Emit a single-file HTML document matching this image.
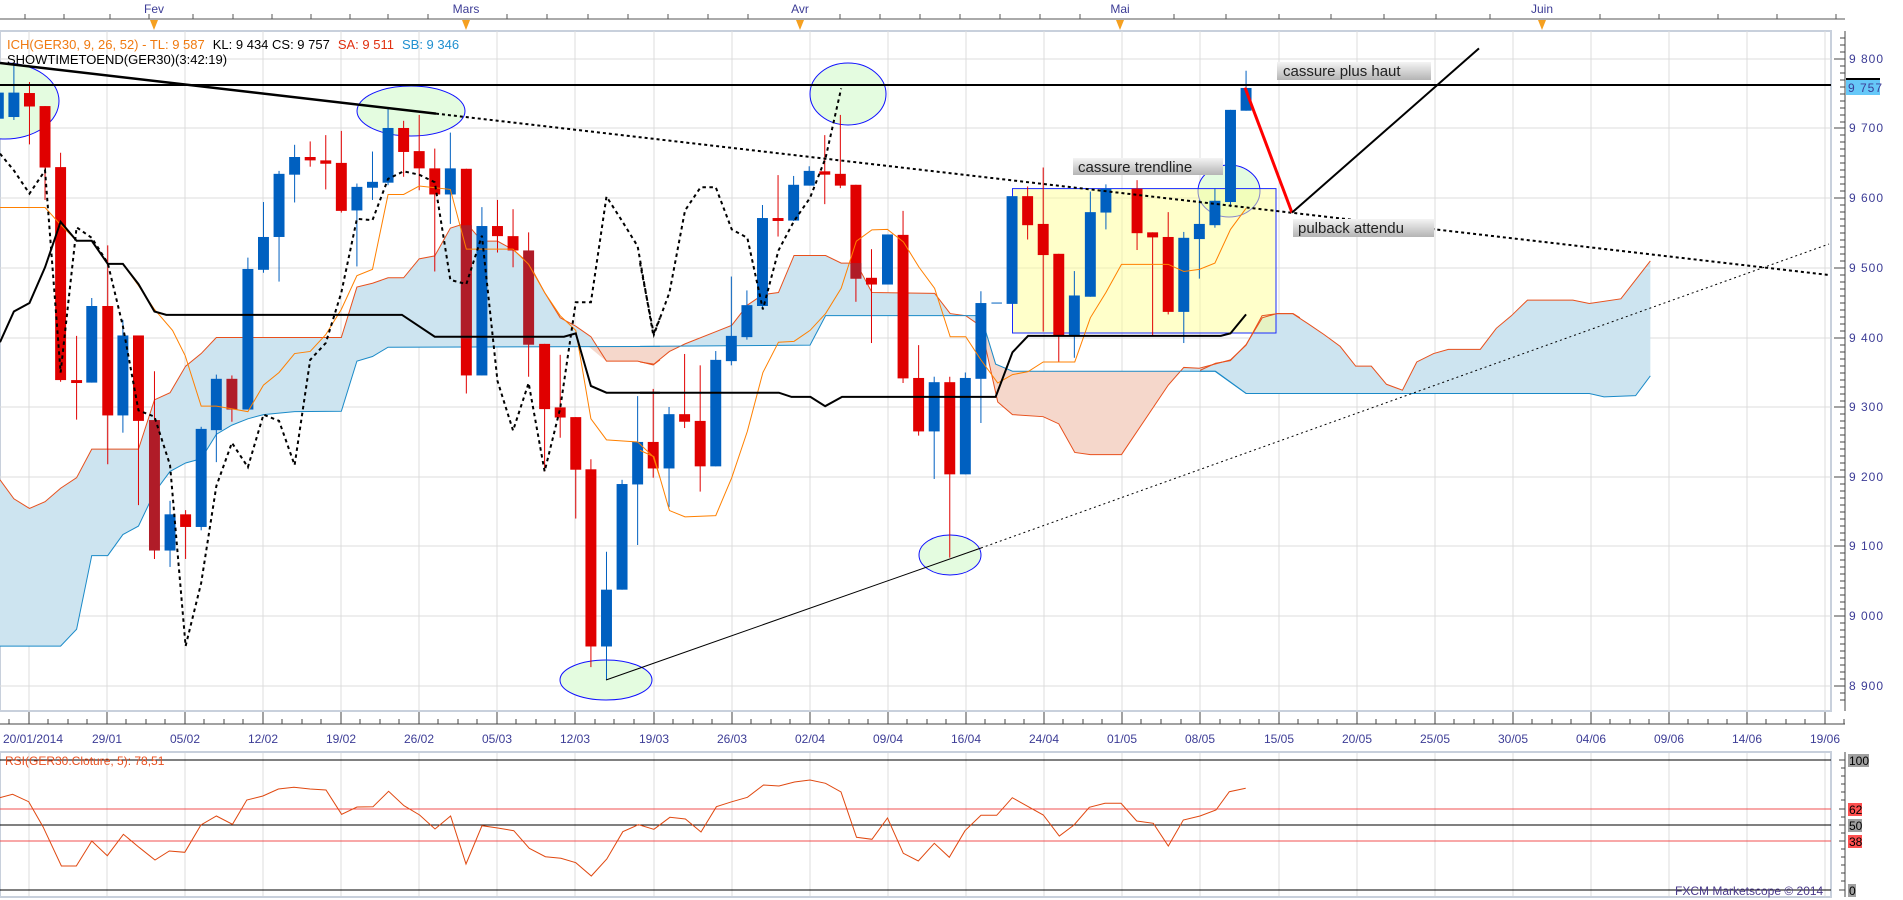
<!DOCTYPE html>
<html><head><meta charset="utf-8">
<style>
html,body{margin:0;padding:0;background:#fff;width:1903px;height:900px;overflow:hidden}
svg{display:block;font-family:"Liberation Sans",sans-serif}
.z *{vector-effect:non-scaling-stroke}
.b{fill:#0060c0}.r{fill:#e00000}.d{fill:#b01c28}
.wb{stroke:#0060c0;stroke-width:1}.wr{stroke:#e00000;stroke-width:1}
.pl{font-size:12px;fill:#3c3c96;letter-spacing:1px}
.dl{font-size:12px;fill:#3c3c96}
</style></head><body>
<svg width="1903" height="900" viewBox="0 0 1903 900" xmlns="http://www.w3.org/2000/svg">
<defs>
<linearGradient id="gg" x1="0" y1="0" x2="0" y2="1"><stop offset="0" stop-color="#f4f4f4"/><stop offset="1" stop-color="#b4b4b4"/></linearGradient>
</defs>
<rect width="1903" height="900" fill="#fff"/>

<g>
<text x="154" y="13" class="dl" text-anchor="middle">Fev</text>
<text x="466" y="13" class="dl" text-anchor="middle">Mars</text>
<text x="800" y="13" class="dl" text-anchor="middle">Avr</text>
<text x="1120" y="13" class="dl" text-anchor="middle">Mai</text>
<text x="1542" y="13" class="dl" text-anchor="middle">Juin</text>
<line x1="0" y1="19" x2="1845" y2="19" stroke="#555" stroke-width="1"/>
<path d="M25 19v-5M64 19v-5M110 19v-5M149 19v-5M193 19v-5M233 19v-5M272 19v-5M311 19v-5M350 19v-5M388 19v-5M428 19v-5M507 19v-5M547 19v-5M588 19v-5M628 19v-5M668 19v-5M708 19v-5M748 19v-5M840 19v-5M880 19v-5M920 19v-5M960 19v-5M1000 19v-5M1040 19v-5M1080 19v-5M1174 19v-5M1226 19v-5M1279 19v-5M1331 19v-5M1384 19v-5M1436 19v-5M1490 19v-5M1600 19v-5M1659 19v-5M1718 19v-5M1777 19v-5M1836 19v-5" stroke="#555"/>
<path d="M150 20h8l-4 10zM462 20h8l-4 10zM796 20h8l-4 10zM1116 20h8l-4 10zM1538 20h8l-4 10z" fill="#f5a020"/>
</g>

<rect x="0" y="31" width="1831" height="680" fill="#fff" stroke="#c8d0dc" stroke-width="2"/>
<g stroke="#dcdcdc" stroke-width="1">
<path d="M0 59H1831M0 128H1831M0 198H1831M0 268H1831M0 338H1831M0 407H1831M0 477H1831M0 546H1831M0 616H1831M0 686H1831"/>
<path d="M29 31V711M107 31V711M185 31V711M263 31V711M341 31V711M419 31V711M497 31V711M575 31V711M654 31V711M732 31V711M810 31V711M888 31V711M966 31V711M1044 31V711M1122 31V711M1200 31V711M1279 31V711M1357 31V711M1435 31V711M1513 31V711M1591 31V711M1669 31V711M1747 31V711M1825 31V711"/>
</g>

<g class="z" transform="translate(0,40) scale(0.42088)">
<polygon fill="#cde4f0" points="0,1045 33,1090 70,1113 107,1097 144,1065 182,1040 218,972 329,972 367,855 404,838 441,775 478,745 514,707 811,707 848,587 885,578 922,565 959,565 996,520 1033,513 1070,447 1108,435 1145,478 1182,478 1219,498 1256,530 1294,600 1331,660 1368,680 1404,705 1441,763 1515,763 1552,772 1568,760 1568,728 922,730 885,752 848,763 811,882 700,883 626,890 589,900 551,915 514,937 478,995 441,1005 404,1025 367,1075 329,1155 292,1175 256,1225 218,1225 182,1400 144,1440 0,1440"/>
</g>
<g class="z" transform="translate(640,40) scale(0.42088)">
<polygon fill="#cde4f0" points="0,765 33,770 70,740 107,722 180,693 218,678 255,630 292,605 329,600 366,512 441,512 478,530 514,530 551,600 700,602 737,650 774,655 810,680 850,860 885,890 958,895 995,912 1033,980 1070,985 1144,985 1255,820 1292,778 1329,780 1403,760 1440,725 1478,655 1515,650 1552,650 1568,660 1568,840 1440,840 1366,787 885,787 845,770 810,655 441,655 404,725 0,728"/>
<polygon fill="#f5d7cb" points="800,655 810,655 845,770 885,787 1280,787 1255,820 1144,985 1070,985 1033,980 995,912 958,895 885,890 850,860 810,680"/>
</g>
<g class="z" transform="translate(1200,40) scale(0.42088)">
<polygon fill="#cde4f0" points="0,785 37,768 72,762 110,723 148,660 183,650 220,650 258,675 295,700 333,728 370,775 407,775 443,818 481,832 515,765 555,745 590,735 666,735 704,685 740,655 778,618 886,618 925,626 1000,615 1070,525 1070,798 1035,845 960,848 925,840 110,840 37,787 0,787"/>
</g>
<polygon fill="#f5d7cb" points="588,346 606,361 638,361 654,364 669,351 678,346"/>

<g fill="#e4fce0" stroke="#1010ff" stroke-width="1">
<ellipse cx="5" cy="101" rx="54" ry="38"/>
<ellipse cx="411" cy="111" rx="54" ry="25"/>
<ellipse cx="848" cy="94" rx="38" ry="31"/>
<ellipse cx="950" cy="555" rx="31" ry="20"/>
<ellipse cx="1229" cy="191" rx="31" ry="26"/>
<ellipse cx="606" cy="680" rx="46" ry="20"/>
</g>
<rect x="1012.5" y="188.6" width="263.5" height="144.4" fill="rgba(255,255,150,0.5)" stroke="#1a2cff" stroke-width="1"/>

<g class="z" transform="translate(0,40) scale(0.42088)" fill="none" stroke-width="1">
<polyline stroke="#e8501c" points="0,1045 33,1090 70,1113 107,1097 144,1065 182,1040 218,972 329,972 367,855 404,838 441,775 478,745 514,707 811,707 848,587 885,578 922,565 959,565 996,520 1033,513 1070,447 1108,435 1145,478 1182,478 1219,498 1256,530 1294,600 1331,660 1368,680 1404,705 1441,763 1515,763 1552,772 1568,760"/>
<polyline stroke="#1a8ac8" points="0,1440 144,1440 182,1400 218,1225 256,1225 292,1175 329,1155 367,1075 404,1025 441,1005 478,995 514,937 551,915 589,900 626,890 700,883 811,882 848,763 885,752 922,730 1568,728"/>
</g>
<g class="z" transform="translate(640,40) scale(0.42088)" fill="none" stroke-width="1">
<polyline stroke="#e8501c" points="0,765 33,770 70,740 107,722 180,693 218,678 255,630 292,605 329,600 366,512 441,512 478,530 514,530 551,600 700,602 737,650 774,655 810,680 850,860 885,890 958,895 995,912 1033,980 1070,985 1144,985 1255,820 1292,778 1329,780 1403,760 1440,725 1478,655 1515,650 1552,650 1568,660"/>
<polyline stroke="#1a8ac8" points="0,728 404,725 441,655 810,655 845,770 885,787 1366,787 1440,840 1568,840"/>
</g>
<g class="z" transform="translate(1200,40) scale(0.42088)" fill="none" stroke-width="1">
<polyline stroke="#e8501c" points="0,785 37,768 72,762 110,723 148,660 183,650 220,650 258,675 295,700 333,728 370,775 407,775 443,818 481,832 515,765 555,745 590,735 666,735 704,685 740,655 778,618 886,618 925,626 1000,615 1070,525"/>
<polyline stroke="#1a8ac8" points="0,787 37,787 110,840 925,840 960,848 1035,845 1070,798"/>
</g>

<g class="z" transform="translate(0,40) scale(0.42088)">
<rect class="b" x="-17" y="125" width="26" height="62"/>
<line class="wb" x1="33" y1="60" x2="33" y2="190"/><rect class="b" x="20" y="125" width="26" height="58"/>
<line class="wr" x1="70" y1="100" x2="70" y2="248"/><rect class="r" x="57" y="126" width="26" height="32"/>
<line class="wr" x1="107" y1="157" x2="107" y2="380"/><rect class="r" x="94" y="157" width="26" height="146"/>
<line class="wr" x1="144" y1="268" x2="144" y2="812"/><rect class="r" x="131" y="302" width="26" height="506"/>
<line class="wr" x1="182" y1="703" x2="182" y2="902"/><rect class="r" x="169" y="808" width="26" height="7"/>
<line class="wb" x1="218" y1="613" x2="218" y2="814"/><rect class="b" x="205" y="632" width="26" height="182"/>
<line class="wr" x1="256" y1="488" x2="256" y2="1008"/><rect class="r" x="243" y="632" width="26" height="260"/>
<line class="wb" x1="292" y1="665" x2="292" y2="933"/><rect class="b" x="279" y="702" width="26" height="190"/>
<line class="wr" x1="329" y1="702" x2="329" y2="1105"/><rect class="r" x="316" y="702" width="26" height="203"/>
<line class="wr" x1="367" y1="787" x2="367" y2="1233"/><rect class="d" x="354" y="903" width="26" height="310"/>
<line class="wb" x1="404" y1="1095" x2="404" y2="1252"/><rect class="b" x="391" y="1127" width="26" height="86"/>
<line class="wr" x1="441" y1="1117" x2="441" y2="1233"/><rect class="r" x="428" y="1127" width="26" height="30"/>
<line class="wb" x1="478" y1="919" x2="478" y2="1165"/><rect class="b" x="465" y="924" width="26" height="233"/>
<line class="wb" x1="514" y1="795" x2="514" y2="1003"/><rect class="b" x="501" y="805" width="26" height="122"/>
<line class="wr" x1="551" y1="797" x2="551" y2="907"/><rect class="d" x="538" y="805" width="26" height="73"/>
<line class="wb" x1="589" y1="517" x2="589" y2="878"/><rect class="b" x="576" y="544" width="26" height="334"/>
<line class="wb" x1="626" y1="385" x2="626" y2="553"/><rect class="b" x="613" y="468" width="26" height="78"/>
<line class="wb" x1="663" y1="311" x2="663" y2="574"/><rect class="b" x="650" y="318" width="26" height="150"/>
<line class="wb" x1="700" y1="249" x2="700" y2="386"/><rect class="b" x="687" y="278" width="26" height="42"/>
<line class="wr" x1="737" y1="241" x2="737" y2="301"/><rect class="r" x="724" y="278" width="26" height="8"/>
<line class="wr" x1="774" y1="226" x2="774" y2="355"/><rect class="r" x="761" y="286" width="26" height="8"/>
<line class="wr" x1="811" y1="216" x2="811" y2="410"/><rect class="r" x="798" y="292" width="26" height="114"/>
<line class="wb" x1="848" y1="341" x2="848" y2="538"/><rect class="b" x="835" y="349" width="26" height="56"/>
<line class="wb" x1="885" y1="265" x2="885" y2="380"/><rect class="b" x="872" y="337" width="26" height="14"/>
<line class="wb" x1="922" y1="162" x2="922" y2="345"/><rect class="b" x="909" y="209" width="26" height="130"/>
<line class="wr" x1="959" y1="192" x2="959" y2="325"/><rect class="r" x="946" y="209" width="26" height="57"/>
<line class="wr" x1="996" y1="178" x2="996" y2="357"/><rect class="r" x="983" y="264" width="26" height="41"/>
<line class="wr" x1="1033" y1="258" x2="1033" y2="550"/><rect class="r" x="1020" y="305" width="26" height="62"/>
<line class="wb" x1="1070" y1="220" x2="1070" y2="437"/><rect class="b" x="1057" y="305" width="26" height="62"/>
<line class="wr" x1="1108" y1="306" x2="1108" y2="840"/><rect class="r" x="1095" y="306" width="26" height="491"/><rect class="d" x="1095" y="440" width="26" height="270"/>
<line class="wb" x1="1145" y1="397" x2="1145" y2="797"/><rect class="b" x="1132" y="442" width="26" height="355"/>
<line class="wr" x1="1182" y1="380" x2="1182" y2="505"/><rect class="r" x="1169" y="442" width="26" height="24"/>
<line class="wr" x1="1219" y1="402" x2="1219" y2="540"/><rect class="r" x="1206" y="466" width="26" height="34"/>
<line class="wr" x1="1256" y1="457" x2="1256" y2="800"/><rect class="d" x="1243" y="500" width="26" height="224"/>
<line class="wr" x1="1294" y1="722" x2="1294" y2="1025"/><rect class="r" x="1281" y="722" width="26" height="155"/>
<line class="wr" x1="1331" y1="748" x2="1331" y2="945"/><rect class="r" x="1318" y="873" width="26" height="24"/>
<line class="wr" x1="1368" y1="896" x2="1368" y2="1137"/><rect class="r" x="1355" y="896" width="26" height="125"/>
<line class="wr" x1="1404" y1="996" x2="1404" y2="1490"/><rect class="r" x="1391" y="1020" width="26" height="421"/>
<line class="wb" x1="1441" y1="1216" x2="1441" y2="1520"/><rect class="b" x="1428" y="1306" width="26" height="135"/>
<line class="wb" x1="1478" y1="1045" x2="1478" y2="1306"/><rect class="b" x="1465" y="1055" width="26" height="251"/>
<line class="wb" x1="1515" y1="846" x2="1515" y2="1200"/><rect class="b" x="1502" y="955" width="26" height="101"/>
<line class="wr" x1="1552" y1="829" x2="1552" y2="1040"/><rect class="r" x="1539" y="955" width="26" height="63"/>
</g>
<g class="z" transform="translate(640,40) scale(0.42088)">
<line class="wb" x1="69" y1="872" x2="69" y2="1110"/><rect class="b" x="56" y="889" width="26" height="129"/>
<line class="wr" x1="106" y1="746" x2="106" y2="922"/><rect class="r" x="93" y="889" width="26" height="18"/>
<line class="wr" x1="143" y1="773" x2="143" y2="1073"/><rect class="r" x="130" y="905" width="26" height="108"/>
<line class="wb" x1="180" y1="739" x2="180" y2="1013"/><rect class="b" x="167" y="760" width="26" height="253"/>
<line class="wb" x1="217" y1="562" x2="217" y2="773"/><rect class="b" x="204" y="703" width="26" height="60"/>
<line class="wb" x1="254" y1="595" x2="254" y2="712"/><rect class="b" x="241" y="630" width="26" height="76"/>
<line class="wb" x1="291" y1="392" x2="291" y2="640"/><rect class="b" x="278" y="423" width="26" height="209"/>
<line class="wr" x1="328" y1="321" x2="328" y2="467"/><rect class="r" x="315" y="423" width="26" height="7"/>
<line class="wb" x1="365" y1="323" x2="365" y2="430"/><rect class="b" x="352" y="344" width="26" height="85"/>
<line class="wb" x1="402" y1="300" x2="402" y2="346"/><rect class="b" x="389" y="311" width="26" height="35"/>
<line class="wr" x1="439" y1="226" x2="439" y2="390"/><rect class="r" x="426" y="312" width="26" height="8"/>
<line class="wr" x1="476" y1="178" x2="476" y2="352"/><rect class="r" x="463" y="318" width="26" height="28"/>
<line class="wr" x1="513" y1="344" x2="513" y2="622"/><rect class="r" x="500" y="344" width="26" height="223"/><rect class="d" x="500" y="530" width="26" height="37"/>
<line class="wr" x1="550" y1="497" x2="550" y2="720"/><rect class="r" x="537" y="565" width="26" height="16"/>
<rect class="b" x="575" y="462" width="26" height="119"/>
<line class="wr" x1="625" y1="406" x2="625" y2="815"/><rect class="r" x="612" y="463" width="26" height="341"/>
<line class="wr" x1="662" y1="725" x2="662" y2="940"/><rect class="r" x="649" y="803" width="26" height="127"/>
<line class="wb" x1="699" y1="800" x2="699" y2="1043"/><rect class="b" x="686" y="813" width="26" height="117"/>
<line class="wr" x1="736" y1="800" x2="736" y2="1230"/><rect class="r" x="723" y="813" width="26" height="219"/>
<line class="wb" x1="773" y1="790" x2="773" y2="1032"/><rect class="b" x="760" y="803" width="26" height="229"/>
<line class="wb" x1="810" y1="597" x2="810" y2="910"/><rect class="b" x="797" y="625" width="26" height="180"/>
<line class="wb" x1="835" y1="625" x2="860" y2="625"/>
<rect class="b" x="871" y="371" width="26" height="256"/>
<line class="wr" x1="921" y1="348" x2="921" y2="474"/><rect class="r" x="908" y="371" width="26" height="69"/>
<line class="wr" x1="958" y1="303" x2="958" y2="693"/><rect class="r" x="945" y="437" width="26" height="74"/>
<line class="wr" x1="995" y1="508" x2="995" y2="765"/><rect class="r" x="982" y="508" width="26" height="195"/>
<line class="wb" x1="1032" y1="549" x2="1032" y2="755"/><rect class="b" x="1019" y="607" width="26" height="96"/>
<line class="wb" x1="1070" y1="360" x2="1070" y2="610"/><rect class="b" x="1057" y="409" width="26" height="201"/>
<line class="wb" x1="1107" y1="343" x2="1107" y2="450"/><rect class="b" x="1094" y="353" width="26" height="57"/>
<line class="wr" x1="1181" y1="333" x2="1181" y2="499"/><rect class="r" x="1168" y="353" width="26" height="106"/>
<line class="wr" x1="1218" y1="457" x2="1218" y2="703"/><rect class="r" x="1205" y="457" width="26" height="12"/>
<line class="wr" x1="1255" y1="409" x2="1255" y2="652"/><rect class="r" x="1242" y="468" width="26" height="178"/>
<line class="wb" x1="1292" y1="456" x2="1292" y2="720"/><rect class="b" x="1279" y="470" width="26" height="176"/>
<line class="wb" x1="1329" y1="380" x2="1329" y2="567"/><rect class="b" x="1316" y="437" width="26" height="36"/>
<line class="wb" x1="1366" y1="352" x2="1366" y2="446"/><rect class="b" x="1353" y="382" width="26" height="58"/>
<line class="wb" x1="1403" y1="166" x2="1403" y2="397"/><rect class="b" x="1390" y="166" width="26" height="219"/>
<line class="wb" x1="1440" y1="73" x2="1440" y2="168"/><rect class="b" x="1427" y="114" width="26" height="54"/>
</g>

<g class="z" transform="translate(0,40) scale(0.42088)" fill="none">
<polyline stroke="#ff8000" stroke-width="1" points="0,398 107,398 145,440 182,477 218,477 256,532 292,532 330,585 367,640 410,690 440,750 478,870 514,870 589,883 626,820 663,790 700,745 737,740 774,700 811,640 848,560 885,545 922,367 959,367 996,347 1070,355 1108,497 1145,497 1219,497 1256,533 1294,600 1331,655 1368,690 1404,900 1441,950 1515,955 1552,990 1568,1040"/>
<polyline stroke="#000" stroke-width="2" points="0,718 33,645 70,625 107,540 144,432 182,477 218,477 256,532 292,532 329,580 367,645 395,653 955,653 1033,705 1340,705 1368,697 1404,822 1441,838 1568,838"/>
<polyline stroke="#000" stroke-width="2" stroke-dasharray="3.5 3.5" points="0,270 33,310 70,365 107,310 144,790 182,445 218,470 256,530 292,680 329,880 367,895 404,1010 441,1440 478,1290 514,1060 551,957 589,1015 626,890 663,905 700,1010 737,760 774,720 811,600 848,425 885,428 922,330 959,312 996,320 1033,338 1070,570 1108,580 1145,465 1182,810 1219,928 1256,815 1294,1025 1331,875 1368,623 1404,623 1441,372 1478,430 1515,490 1552,700 1568,660"/>
</g>
<g class="z" transform="translate(640,40) scale(0.42088)" fill="none">
<polyline stroke="#ff8000" stroke-width="1" points="0,975 33,990 70,1118 107,1133 180,1130 218,1040 255,930 292,790 329,718 366,716 404,690 441,650 478,590 514,478 551,451 588,450 626,480 663,540 700,590 737,705 774,705 810,760 850,815 885,795 922,788 958,765 1033,765 1070,660 1107,600 1144,533 1255,533 1292,550 1329,545 1366,530 1403,450 1440,400"/>
<polyline stroke="#000" stroke-width="2" points="0,838 330,838 360,848 405,848 440,870 480,848 845,848 885,742 922,703 1380,703 1403,697 1440,652"/>
<polyline stroke="#000" stroke-width="2" stroke-dasharray="3.5 3.5" points="0,530 33,700 70,600 107,405 144,350 180,350 218,450 255,470 292,640 329,500 366,430 404,375 441,280 478,115"/>
</g>

<line x1="0" y1="85" x2="1831" y2="85" stroke="#000" stroke-width="2"/>
<line x1="0" y1="63" x2="436" y2="113.6" stroke="#000" stroke-width="2.5"/>
<line x1="436" y1="113.6" x2="1829" y2="275" stroke="#000" stroke-width="2" stroke-dasharray="3 3"/>
<line x1="606" y1="680" x2="981" y2="548" stroke="#000" stroke-width="1"/>
<line x1="981" y1="548" x2="1829" y2="244" stroke="#000" stroke-width="1" stroke-dasharray="2 3"/>
<line x1="1245" y1="87.6" x2="1292" y2="212.6" stroke="#f00" stroke-width="3"/>
<line x1="1292" y1="212.6" x2="1479" y2="48.4" stroke="#000" stroke-width="2"/>

<rect x="1277" y="62" width="154" height="18" fill="url(#gg)"/>
<text x="1283" y="76" font-size="15" fill="#222">cassure plus haut</text>
<rect x="1293" y="219" width="141" height="18" fill="url(#gg)"/>
<text x="1298" y="233" font-size="15" fill="#222">pulback attendu</text>
<rect x="1073" y="158" width="150" height="17" fill="url(#gg)"/>
<text x="1078" y="172" font-size="15" fill="#222">cassure trendline</text>

<text x="7" y="49" font-size="13"><tspan fill="#f07a10">ICH(GER30, 9, 26, 52) -  TL: 9 587</tspan><tspan fill="#000" dx="8">KL: 9 434  CS: 9 757</tspan><tspan fill="#e03010" dx="8">SA: 9 511</tspan><tspan fill="#2090d0" dx="8">SB: 9 346</tspan></text>
<text x="7" y="64" font-size="13" fill="#000">SHOWTIMETOEND(GER30)(3:42:19)</text>

<line x1="1845" y1="31" x2="1845" y2="711" stroke="#444"/>
<g stroke="#444">
<path d="M1840 38h5M1840 45h5M1840 52h5M1834 59h11M1840 66h5M1840 73h5M1840 80h5M1840 87h5M1840 94h5M1840 101h5M1840 108h5M1840 115h5M1840 122h5M1834 128h11M1840 135h5M1840 142h5M1840 149h5M1840 156h5M1840 163h5M1840 170h5M1840 177h5M1840 184h5M1840 191h5M1834 198h11M1840 205h5M1840 212h5M1840 219h5M1840 226h5M1840 233h5M1840 240h5M1840 247h5M1840 254h5M1840 261h5M1834 268h11M1840 275h5M1840 282h5M1840 289h5M1840 296h5M1840 303h5M1840 310h5M1840 317h5M1840 324h5M1840 331h5M1834 338h11M1840 345h5M1840 352h5M1840 359h5M1840 366h5M1840 373h5M1840 380h5M1840 387h5M1840 394h5M1840 401h5M1834 407h11M1840 414h5M1840 421h5M1840 428h5M1840 435h5M1840 442h5M1840 449h5M1840 456h5M1840 463h5M1840 470h5M1834 477h11M1840 484h5M1840 491h5M1840 498h5M1840 505h5M1840 512h5M1840 519h5M1840 526h5M1840 533h5M1840 540h5M1834 546h11M1840 553h5M1840 560h5M1840 567h5M1840 574h5M1840 581h5M1840 588h5M1840 595h5M1840 602h5M1840 609h5M1834 616h11M1840 623h5M1840 630h5M1840 637h5M1840 644h5M1840 651h5M1840 658h5M1840 665h5M1840 672h5M1840 679h5M1834 686h11M1840 693h5M1840 700h5"/>
</g>
<text x="1849" y="63" class="pl">9 800</text>
<text x="1849" y="132" class="pl">9 700</text>
<text x="1849" y="202" class="pl">9 600</text>
<text x="1849" y="272" class="pl">9 500</text>
<text x="1849" y="342" class="pl">9 400</text>
<text x="1849" y="411" class="pl">9 300</text>
<text x="1849" y="481" class="pl">9 200</text>
<text x="1849" y="550" class="pl">9 100</text>
<text x="1849" y="620" class="pl">9 000</text>
<text x="1849" y="690" class="pl">8 900</text>
<rect x="1846" y="78" width="34" height="2" fill="#000"/>
<rect x="1846" y="80" width="34" height="15" fill="#66c8f8"/>
<text x="1848" y="92" class="pl" fill="#203080">9 757</text>

<line x1="0" y1="724" x2="1845" y2="724" stroke="#444"/>
<path stroke="#444" d="M29 712v12M107 712v12M185 712v12M263 712v12M341 712v12M419 712v12M497 712v12M575 712v12M654 712v12M732 712v12M810 712v12M888 712v12M966 712v12M1044 712v12M1122 712v12M1200 712v12M1279 712v12M1357 712v12M1435 712v12M1513 712v12M1591 712v12M1669 712v12M1747 712v12M1825 712v12"/>
<path stroke="#444" d="M9 724v-5M48 724v-5M68 724v-5M87 724v-5M126 724v-5M146 724v-5M165 724v-5M204 724v-5M224 724v-5M243 724v-5M282 724v-5M302 724v-5M321 724v-5M360 724v-5M380 724v-5M399 724v-5M438 724v-5M458 724v-5M477 724v-5M516 724v-5M536 724v-5M555 724v-5M595 724v-5M614 724v-5M634 724v-5M673 724v-5M693 724v-5M712 724v-5M751 724v-5M771 724v-5M790 724v-5M829 724v-5M849 724v-5M868 724v-5M907 724v-5M927 724v-5M946 724v-5M985 724v-5M1005 724v-5M1024 724v-5M1063 724v-5M1083 724v-5M1102 724v-5M1141 724v-5M1161 724v-5M1181 724v-5M1220 724v-5M1240 724v-5M1259 724v-5M1298 724v-5M1318 724v-5M1337 724v-5M1376 724v-5M1396 724v-5M1415 724v-5M1454 724v-5M1474 724v-5M1493 724v-5M1532 724v-5M1552 724v-5M1571 724v-5M1610 724v-5M1630 724v-5M1649 724v-5M1688 724v-5M1708 724v-5M1727 724v-5M1766 724v-5M1786 724v-5M1805 724v-5M1844 724v-5"/>
<g class="dl" text-anchor="middle">
<text x="33" y="743">20/01/2014</text><text x="107" y="743">29/01</text><text x="185" y="743">05/02</text><text x="263" y="743">12/02</text><text x="341" y="743">19/02</text><text x="419" y="743">26/02</text><text x="497" y="743">05/03</text><text x="575" y="743">12/03</text><text x="654" y="743">19/03</text><text x="732" y="743">26/03</text><text x="810" y="743">02/04</text><text x="888" y="743">09/04</text><text x="966" y="743">16/04</text><text x="1044" y="743">24/04</text><text x="1122" y="743">01/05</text><text x="1200" y="743">08/05</text><text x="1279" y="743">15/05</text><text x="1357" y="743">20/05</text><text x="1435" y="743">25/05</text><text x="1513" y="743">30/05</text><text x="1591" y="743">04/06</text><text x="1669" y="743">09/06</text><text x="1747" y="743">14/06</text><text x="1825" y="743">19/06</text>
</g>

<rect x="0" y="752" width="1831" height="145" fill="#fff" stroke="#c8d0dc" stroke-width="2"/>
<path stroke="#dcdcdc" d="M29 753V896M107 753V896M185 753V896M263 753V896M341 753V896M419 753V896M497 753V896M575 753V896M654 753V896M732 753V896M810 753V896M888 753V896M966 753V896M1044 753V896M1122 753V896M1200 753V896M1279 753V896M1357 753V896M1435 753V896M1513 753V896M1591 753V896M1669 753V896M1747 753V896M1825 753V896"/>
<line x1="0" y1="760" x2="1831" y2="760" stroke="#000"/>
<line x1="0" y1="809" x2="1831" y2="809" stroke="#f05050"/>
<line x1="0" y1="825" x2="1831" y2="825" stroke="#000"/>
<line x1="0" y1="841" x2="1831" y2="841" stroke="#f05050"/>
<line x1="0" y1="890" x2="1831" y2="890" stroke="#000"/>
<text x="5" y="765" font-size="12" fill="#e85020">RSI(GER30.Cloture, 5): 78,51</text>
<polyline fill="none" stroke="#e04810" stroke-width="1" points="0,797.7 12.6,794.3 28.7,801.7 43,826.7 61.4,866 76.3,866 91.8,841 107.3,855.7 123.4,834.3 139.5,847.7 155,860 169.3,851 184.8,852.3 200.9,825 216.4,816 232.5,824.3 246.8,800 262.9,796 278.4,789 293.9,787.3 310,789 326,790 341.6,814.3 357,807 373,806.7 388.6,791.3 404,805.7 419.6,815 435,829 450.6,816 466,864 482,825.7 497.7,828 513.8,830.7 529.3,848.3 545.4,856.7 560.9,858.3 575.8,862.7 591.3,876 606.8,859 622.8,831.7 638.4,824.7 653.9,829.3 669.9,817.3 685.4,819 701,832 716.4,806.7 732,801.7 747.4,797.3 763.5,785 779,786 794.5,782 810,780 825.5,783.3 841,792 856.5,837.3 872,839.3 887.5,818 903.3,853.3 918.3,861 934.3,843.3 949.3,857.3 965,830.7 981,815.3 996.7,815.3 1012.3,797.7 1028.3,806.7 1043.3,815 1059.3,836 1074,825 1089.3,807.3 1105,803.3 1121,803.3 1136.7,821 1153.3,823.3 1168.3,846 1183.3,820 1200,816 1216,810 1229.3,791.7 1245.7,788.3"/>
<text x="1675" y="895" font-size="12" fill="#4a3a8a">FXCM Marketscope © 2014</text>
<line x1="1845" y1="752" x2="1845" y2="897" stroke="#444"/>
<path stroke="#444" d="M1839 760h6M1841 768h4M1841 776h4M1841 784h4M1841 792h4M1841 800h4M1839 809h6M1841 817h4M1839 825h6M1841 833h4M1839 841h6M1841 849h4M1841 857h4M1841 865h4M1841 873h4M1841 881h4M1839 890h6"/>
<rect x="1848" y="754" width="21" height="13" fill="#a0a0a0"/><text x="1849" y="765" font-size="12" fill="#000">100</text>
<rect x="1848" y="803" width="14" height="13" fill="#ff5050"/><text x="1849" y="814" font-size="12" fill="#000">62</text>
<rect x="1848" y="819" width="14" height="13" fill="#a0a0a0"/><text x="1849" y="830" font-size="12" fill="#000">50</text>
<rect x="1848" y="835" width="14" height="13" fill="#ff5050"/><text x="1849" y="846" font-size="12" fill="#000">38</text>
<rect x="1848" y="884" width="8" height="13" fill="#a0a0a0"/><text x="1849" y="895" font-size="12" fill="#000">0</text>
</svg>
</body></html>
